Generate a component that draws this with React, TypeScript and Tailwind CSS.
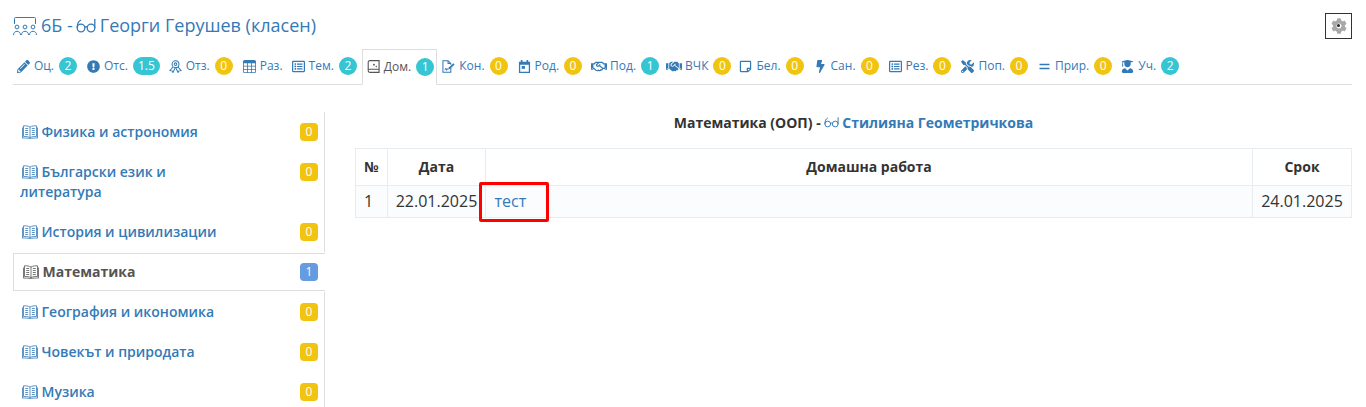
import type { ReactNode } from "react";
import {
  FaPencilAlt,
  FaExclamationCircle,
  FaRegListAlt,
  FaRegHandshake,
  FaHandshake,
  FaRegStickyNote,
  FaBolt,
  FaTools,
  FaUserGraduate,
  FaCog,
} from "react-icons/fa";
import { BsTable } from "react-icons/bs";

function Glasses({ className }: { className?: string }) {
  return (
    <svg viewBox="0 0 20 16" fill="none" stroke="currentColor" strokeWidth="1.3" className={className}>
      <circle cx="5" cy="10" r="3.8" />
      <circle cx="15" cy="10" r="3.8" />
      <path d="M8.400 9.200c1-.7 2.200-.7 3.200 0" />
      <path d="M1.200 10C1.200 6 2.500 3 5 2" />
      <path d="M18.800 10V1" />
    </svg>
  );
}

function ClassRoom({ className }: { className?: string }) {
  return (
    <svg viewBox="0 0 24 20" fill="none" stroke="currentColor" strokeWidth="1" className={className}>
      <path d="M1.500 8V2.500a1 1 0 0 1 1-1h19a1 1 0 0 1 1 1V8" />
      <circle cx="4" cy="11" r="1.900" />
      <circle cx="12" cy="11" r="1.900" />
      <circle cx="20" cy="11" r="1.900" />
      <path d="M.5 19c0-5 7-5 7 0M8.500 19c0-5 7-5 7 0M16.500 19c0-5 7-5 7 0" />
    </svg>
  );
}

function Book({ className }: { className?: string }) {
  return (
    <svg viewBox="0 0 16 14" fill="none" stroke="currentColor" strokeWidth="0.8" className={className}>
      <path d="M8 2C6.500 1 3.500.7 1.500.8v10.700c2-.1 5 .1 6.500 1.100 1.500-1 4.500-1.200 6.500-1.100V.8C12.500.7 9.500 1 8 2zM8 2v10.600" />
      <path d="M.5 2.500v10.600c2.500-.2 5.500 0 7.500.6 2-.6 5-.8 7.500-.6V2.500" />
      <path d="M3.200 3.500h3M3.200 5.500h3M3.200 7.500h3M3.200 9.500h3M9.800 3.500h3M9.800 5.500h3M9.800 7.500h3M9.800 9.500h3" />
    </svg>
  );
}

function HomeBook({ className }: { className?: string }) {
  return (
    <svg viewBox="0 0 14 14" fill="none" stroke="currentColor" strokeWidth="1.200" className={className}>
      <path d="M3 .7h10v9.300H3A1.700 1.700 0 0 0 1.300 11.700V2.400A1.700 1.700 0 0 1 3 .7z" />
      <path d="M1.300 11.600A1.700 1.700 0 0 0 3 13.300h10V10" />
      <circle cx="7.500" cy="5" r="1" fill="currentColor" stroke="none" />
      <circle cx="10" cy="7" r=".8" fill="currentColor" stroke="none" />
    </svg>
  );
}

function Ribbons({ className }: { className?: string }) {
  return (
    <svg viewBox="0 0 14 14" fill="none" stroke="currentColor" strokeWidth="1.100" className={className}>
      <circle cx="7" cy="4.500" r="3.700" />
      <circle cx="7" cy="4.500" r="1.400" />
      <path d="M4.200 7.500 1 11.500l2.300.2.900 1.800L6.500 9M9.800 7.500l3.200 4-2.300.2-.9 1.800L7.500 9" />
    </svg>
  );
}

function SignedFile({ className }: { className?: string }) {
  return (
    <svg viewBox="0 0 14 14" fill="none" stroke="currentColor" strokeWidth="1.100" className={className}>
      <path d="M9.500 8.500v4.800H1V.7h5.500l3 3v1.500M6.500.7v3h3" />
      <path d="M3 10.500c1-1.800 1.500-1.800 2 0 .5-1 1-1 2-.5" />
      <path d="M7 10l.3-1.800 5-4.700 1.300 1.300-5 4.800z" fill="currentColor" stroke="none" />
    </svg>
  );
}

function CalendarDot({ className }: { className?: string }) {
  return (
    <svg viewBox="0 0 14 14" fill="currentColor" className={className}>
      <path d="M3 0h1.800v2h4.400V0H11v2h2v12H1V2h2zm-.6 5v7.600h9.200V5z" />
      <rect x="4" y="6.500" width="3.500" height="3" />
    </svg>
  );
}

function EqualsIcon({ className }: { className?: string }) {
  return (
    <svg viewBox="0 0 13 13" fill="none" stroke="currentColor" strokeWidth="1.500" className={className}>
      <path d="M1.500 4.500h10M1.500 8.500h10" />
    </svg>
  );
}

function TabBadge({ value, tone }: { value: string; tone: "teal" | "yellow" }) {
  return (
    <span
      className={
        tone === "teal"
          ? "ml-[5px] flex h-[18px] min-w-[18px] items-center justify-center rounded-full bg-[#36c6d3] px-[5px] text-[12px] text-white"
          : "ml-[5px] flex h-[18px] min-w-[18px] items-center justify-center rounded-full bg-[#f1c40f] px-[5px] text-[12px] text-white"
      }
    >
      {value}
    </span>
  );
}

type Tab = { icon: ReactNode; label: string; badge?: string; tone?: "teal" | "yellow"; active?: boolean; mr?: string };

const iconCls = "mr-[4px] h-[13px] w-[13px] shrink-0";
const wideCls = "mr-[3px] h-[13px] w-[16px] shrink-0";

const tabs: Tab[] = [
  { icon: <FaPencilAlt className={iconCls} />, label: "Оц.", badge: "2", tone: "teal" },
  { icon: <FaExclamationCircle className={iconCls} />, label: "Отс.", badge: "1.5", tone: "teal", mr: "mr-[1px]" },
  { icon: <Ribbons className={iconCls} />, label: "Отз.", badge: "0", tone: "yellow" },
  { icon: <BsTable className={iconCls} />, label: "Раз.", mr: "mr-[1px]" },
  { icon: <FaRegListAlt className={iconCls} />, label: "Тем.", badge: "2", tone: "teal", mr: "mr-[1px]" },
  { icon: <HomeBook className={iconCls} />, label: "Дом.", badge: "1", tone: "teal", active: true },
  { icon: <SignedFile className={iconCls} />, label: "Кон.", badge: "0", tone: "yellow" },
  { icon: <CalendarDot className={iconCls} />, label: "Род.", badge: "0", tone: "yellow", mr: "mr-[1px]" },
  { icon: <FaRegHandshake className={wideCls} />, label: "Под.", badge: "1", tone: "teal", mr: "mr-[-1px]" },
  { icon: <FaHandshake className={wideCls} />, label: "ВЧК", badge: "0", tone: "yellow", mr: "mr-0" },
  { icon: <FaRegStickyNote className={iconCls} />, label: "Бел.", badge: "0", tone: "yellow" },
  { icon: <FaBolt className={iconCls} />, label: "Сан.", badge: "0", tone: "yellow" },
  { icon: <FaRegListAlt className={iconCls} />, label: "Рез.", badge: "0", tone: "yellow" },
  { icon: <FaTools className={iconCls} />, label: "Поп.", badge: "0", tone: "yellow" },
  { icon: <EqualsIcon className={iconCls} />, label: "Прир.", badge: "0", tone: "yellow", mr: "mr-[1px]" },
  { icon: <FaUserGraduate className={iconCls} />, label: "Уч.", badge: "2", tone: "teal" },
];

const subjects = [
  { name: "Физика и астрономия", count: "0" },
  { name: "Български език и литература", count: "0", wrap: true },
  { name: "История и цивилизации", count: "0" },
  { name: "Математика", count: "1", active: true },
  { name: "География и икономика", count: "0" },
  { name: "Човекът и природата", count: "0" },
  { name: "Музика", count: "0" },
];

export default function App() {
  return (
    <div className="h-[407px] overflow-hidden bg-white pl-[13px] pr-[14px] font-['Open_Sans',sans-serif] text-[#333]">
      {/* Title */}
      <div className="flex h-[49px] items-start justify-between pt-[13px]">
        <h1 className="flex items-center text-[18px] leading-[25px] text-[#337ab7]">
          <ClassRoom className="mr-[4px] h-[20px] w-[24px]" />
          <span>6Б -</span>
          <Glasses className="ml-[3px] mr-[4px] h-[16px] w-[20px]" />
          <span>Георги Герушев (класен)</span>
        </h1>
        <button className="relative flex h-[26px] w-[27px] items-center justify-center border border-[#333]">
          <FaCog className="h-[16px] w-[16px] text-[#a8a8a8]" />
          <span className="absolute left-[11px] top-[10px] h-[3px] w-[3px] rounded-full bg-[#223]" />
        </button>
      </div>

      {/* Tabs */}
      <div className="flex h-[36px] items-stretch border-b border-[#ddd] text-[12px]">
        {tabs.map((t) => (
          <a
            key={t.label}
            className={
              t.active
                ? "-mb-px mr-[1px] flex items-center border border-[#ddd] border-b-white pb-[1px] pl-[4px] pr-[2px] text-[#555]"
                : `${t.mr ?? "mr-[2px]"} flex items-center border border-transparent px-[3px] pb-[1px] text-[#337ab7]`
            }
          >
            {t.icon}
            <span>{t.label}</span>
            {t.badge && <TabBadge value={t.badge} tone={t.tone ?? "teal"} />}
          </a>
        ))}
      </div>

      {/* Body */}
      <div className="mt-[27px] flex gap-[30px]">
        <ul className="w-[312px] shrink-0 text-[14px] font-semibold leading-[20px]">
          {subjects.map((s) => (
            <li
              key={s.name}
              className={
                s.active
                  ? "my-[1px] flex h-[38px] items-start justify-between border border-r-0 border-[#ddd] bg-white py-[8px] pl-[7px] pr-[7px] font-bold text-[#555]"
                  : "flex items-start justify-between border-r border-[#ddd] py-[10px] pl-[7px] pr-[6px] text-[#337ab7]"
              }
            >
              <span className={s.wrap ? "w-[190px]" : ""}>
                <Book className="ml-[2px] mr-[3.5px] inline-block h-[14px] w-[16px] align-[-2px]" />
                {s.name}
              </span>
              <span
                className={
                  s.active
                    ? "mt-[1px] flex h-[18px] w-[18px] shrink-0 items-center justify-center rounded-[4px] bg-[#659be0] text-[12px] font-normal text-white"
                    : "mt-[1px] flex h-[18px] w-[18px] shrink-0 items-center justify-center rounded-[4px] bg-[#f1c40f] text-[12px] font-normal text-white"
                }
              >
                {s.count}
              </span>
            </li>
          ))}
        </ul>

        <div className="min-w-0 flex-1">
          <p className="mb-[16px] flex h-[20px] items-center justify-center pt-[1px] text-[14px] font-bold leading-[20px] text-[#333]">
            Математика (ООП) -&nbsp;
            <Glasses className="mr-[3px] h-[13px] w-[15px] text-[#337ab7]" />
            <span className="text-[#337ab7]">Стилияна Геометричкова</span>
          </p>
          <table className="w-full table-fixed border-collapse border border-[#e7ecf1]">
            <thead>
              <tr className="h-[37px] text-[14px] font-bold">
                <th className="w-[32px] border border-[#e7ecf1] pb-[2px]">№</th>
                <th className="w-[98px] border border-[#e7ecf1] pb-[2px]">Дата</th>
                <th className="border border-[#e7ecf1] pb-[2px]">Домашна работа</th>
                <th className="w-[99px] border border-[#e7ecf1] pb-[2px]">Срок</th>
              </tr>
            </thead>
            <tbody>
              <tr className="h-[32px] bg-[#fbfcfd] text-[16px]">
                <td className="border border-[#e7ecf1] pb-[2px] pl-[8px]">1</td>
                <td className="whitespace-nowrap border border-[#e7ecf1] pb-[2px] text-center">22.01.2025</td>
                <td className="relative border border-[#e7ecf1] pb-[2px] pl-[8.5px] text-[#337ab7]">
                  тест
                  {/* red annotation drawn over the cell */}
                  <span className="absolute left-[-7px] top-[-4px] h-[40px] w-[70px] rounded-[2px] border-[3px] border-[#ff0000]" />
                </td>
                <td className="whitespace-nowrap border border-[#e7ecf1] pb-[2px] text-center">24.01.2025</td>
              </tr>
            </tbody>
          </table>
        </div>
      </div>
    </div>
  );
}
